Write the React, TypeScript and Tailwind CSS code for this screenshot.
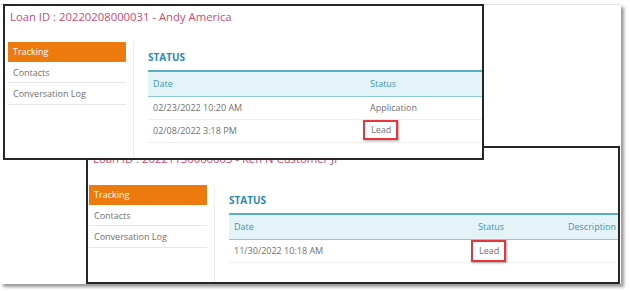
type Row = { date: string; status: string; lead?: boolean };

type ShotProps = {
  title: string;
  rows: Row[];
  dateCol: string;
  showDescription?: boolean;
  bodyTop: string;
  sideLeft: string;
  leadBox: string;
};

function Shot({ title, rows, dateCol, showDescription, bodyTop, sideLeft, leadBox }: ShotProps) {
  return (
    <div className="flex h-full flex-col overflow-hidden border-2 border-[#262626] bg-white">
      <div className="h-[20px] shrink-0 whitespace-nowrap pl-[5px] pt-[2px] text-[11.3px] leading-[18px] text-[#c94b72]">
        {title}
      </div>
      <div className={`flex flex-1 ${bodyTop}`}>
        <div className={`w-[118px] shrink-0 text-[9px] text-[#707070] ${sideLeft}`}>
          <div className="h-[20px] bg-[#ec7a0c] pl-[5px] leading-[20px] text-white">Tracking</div>
          <div className="h-[21px] border-b border-[#e6e6e6] pl-[5px] leading-[21px]">Contacts</div>
          <div className="h-[22px] border-b border-[#e6e6e6] pl-[5px] leading-[22px]">Conversation Log</div>
        </div>
        <div className="ml-[7px] w-px shrink-0 bg-[#ececec]" />
        <div className="ml-[14px] min-w-0 flex-1">
          <div className="pt-[8px] text-[10px] font-bold leading-[14px] text-[#2b8ab0]">STATUS</div>
          <div className="mt-[6px] w-[600px] text-[9px]">
            <div className="flex h-[27px] items-center border-t-2 border-b border-t-[#5aaec4] border-b-[#8ccbdc] bg-[#e4f3f8] text-[#3a97b8]">
              <div className={`${dateCol} shrink-0 pl-[5px]`}>Date</div>
              <div className={showDescription ? "w-[90px] shrink-0 pl-[5px]" : "pl-[5px]"}>Status</div>
              {showDescription && <div className="pl-[5px]">Description</div>}
            </div>
            {rows.map((r) => (
              <div key={r.date} className="flex h-[23px] border-b border-[#efefef] text-[#707070]">
                <div className={`${dateCol} shrink-0 pl-[5px] leading-[22px]`}>{r.date}</div>
                {r.lead ? (
                  <div>
                    <span
                      className={`-ml-[2px] inline-block border-2 border-[#e8343c] pl-[6px] pr-[5px] shadow-[1px_1px_2px_rgba(0,0,0,0.35)] ${leadBox}`}
                    >
                      Lead
                    </span>
                  </div>
                ) : (
                  <div className="pl-[5px] leading-[22px]">{r.status}</div>
                )}
              </div>
            ))}
          </div>
        </div>
      </div>
    </div>
  );
}

export default function App() {
  return (
    <div className="relative h-[291px] w-[630px] overflow-hidden bg-white font-['Open_Sans',sans-serif]">
      <div className="absolute left-0 top-[4px] h-[280px] w-[621px] border-t border-[#e4e4e4] bg-white shadow-[3px_3px_3px_rgba(0,0,0,0.4)]" />

      <div className="absolute left-[86px] top-[146px] h-[138px] w-[534px]">
        <Shot
          title="Loan ID : 20221130000003  - Ken N Customer Jr"
          rows={[{ date: "11/30/2022 10:18 AM", status: "Lead", lead: true }]}
          dateCol="w-[244px]"
          showDescription
          bodyTop="mt-[17px]"
          sideLeft="ml-[1px]"
          leadBox="h-[22px] leading-[18px]"
        />
      </div>

      <div className="absolute left-[3px] top-[4px] z-10 h-[156px] w-[481px]">
        <Shot
          title="Loan ID : 20220208000031  - Andy America"
          rows={[
            { date: "02/23/2022 10:20 AM", status: "Application" },
            { date: "02/08/2022 3:18 PM", status: "Lead", lead: true },
          ]}
          dateCol="w-[217px]"
          bodyTop="mt-[16px]"
          sideLeft="ml-[3px]"
          leadBox="h-[20px] leading-[16px]"
        />
      </div>
    </div>
  );
}
